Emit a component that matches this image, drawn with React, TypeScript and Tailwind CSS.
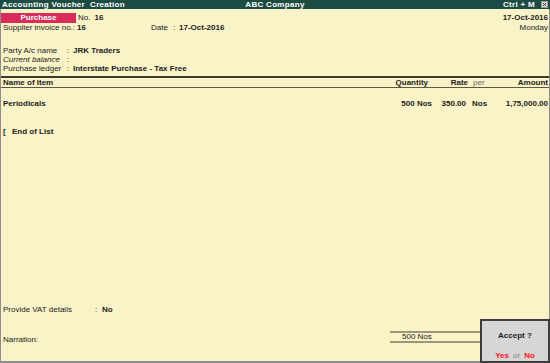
import React from "react";

const font = { fontFamily: '"Liberation Sans", Arial, sans-serif' };

const LedgerRow: React.FC<{ label: string; value?: string; italic?: boolean }> = ({ label, value, italic }) => (
  <div className="flex h-[9px] items-center leading-[9px]">
    <span className={`w-[64px] ${italic ? "italic" : ""}`}>{label}</span>
    <span className="w-[6px]">:</span>
    {value && <span className="font-bold">{value}</span>}
  </div>
);

const App: React.FC = () => {
  return (
    <div
      className="relative flex h-[363px] w-[550px] flex-col overflow-hidden bg-[#f9f3c7] text-[8px] text-[#1c1c1c]"
      style={font}
    >
      {/* title bar */}
      <div className="grid h-[9px] grid-cols-3 items-center bg-[#1c4c44] px-[2px] text-[8px] font-bold leading-none tracking-[0.3px] text-white">
        <span className="whitespace-pre">Accounting Voucher  Creation</span>
        <span className="text-center">ABC Company</span>
        <div className="flex items-center justify-end gap-[6px]">
          <span>Ctrl + M</span>
          <svg width="7" height="7" viewBox="0 0 7 7">
            <rect x="0.5" y="0.5" width="6" height="6" fill="#d8d8d8" stroke="#9a9a9a" />
            <path d="M2 2 L5 5 M5 2 L2 5" stroke="#333" strokeWidth="0.9" />
          </svg>
        </div>
      </div>

      <div className="flex flex-1 flex-col border-x border-b-2 border-[#8d8d8d]">
        {/* voucher head */}
        <div className="flex justify-between pr-[1px] pt-[4px]">
          <div className="flex flex-col">
            <div className="flex h-[10px] items-center">
              <div className="flex h-[10px] w-[75px] items-center justify-center bg-[#d92c5a] font-bold text-white">
                Purchase
              </div>
              <span className="ml-[2px]">No.</span>
              <span className="ml-[4px] font-bold">16</span>
            </div>
            <div className="flex h-[9px] items-center pl-[2px] leading-[9px]">
              <span className="w-[74px]">Supplier invoice no.:</span>
              <span className="w-[74px] font-bold">16</span>
              <span className="w-[22px]">Date</span>
              <span className="w-[6px]">:</span>
              <span className="font-bold">17-Oct-2016</span>
            </div>
            <div className="mt-[14px] pl-[2px]">
              <LedgerRow label="Party A/c name" value="JRK Traders" />
              <LedgerRow label="Current balance" italic />
              <LedgerRow label="Purchase ledger" value="Interstate Purchase - Tax Free" />
            </div>
          </div>
          <div className="flex flex-col items-end">
            <div className="h-[10px] font-bold leading-[9px]">17-Oct-2016</div>
            <div className="h-[9px] leading-[9px]">Monday</div>
          </div>
        </div>

        {/* item table header */}
        <div className="mt-[3px] flex h-[12px] items-start border-y-2 border-b border-t-[#3b3a30] border-b-[#5e5a45] pl-[2px] pr-[1px] font-bold leading-[9px]">
          <span className="flex-1">Name of Item</span>
          <span className="w-[60px] pr-[4px] text-right">Quantity</span>
          <span className="w-[36px] text-right">Rate</span>
          <span className="w-[20px] pl-[5px] font-normal text-[#6b6b6b]">per</span>
          <span className="w-[60px] text-right">Amount</span>
        </div>

        {/* items */}
        <div className="mt-[11px] flex h-[9px] items-center pl-[2px] pr-[1px] font-bold leading-[9px]">
          <span className="flex-1">Periodicals</span>
          <span className="w-[60px] text-right">500 Nos</span>
          <span className="w-[34px] text-right">350.00</span>
          <span className="w-[22px] pl-[6px]">Nos</span>
          <span className="w-[60px] text-right">1,75,000.00</span>
        </div>
        <div className="mt-[19px] flex h-[9px] items-center pl-[2px] font-bold leading-[9px]">
          <span className="w-[9px]">[</span>
          <span>End of List</span>
        </div>

        <div className="flex-1" />

        {/* footer */}
        <div className="flex h-[9px] items-center pl-[2px] leading-[9px]">
          <span className="w-[92px]">Provide VAT details</span>
          <span className="w-[7px]">:</span>
          <span className="font-bold">No</span>
        </div>
        <div className="mb-[16px] mt-[17px] flex h-[14px] items-start pl-[2px]">
          <span className="pt-[4px] leading-[9px]">Narration:</span>
          <div className="ml-auto mr-[69px] flex h-[12px] w-[90px] items-center border-y-2 border-[#9c9777] pl-[12px] leading-[8px]">
            500 Nos
          </div>
        </div>
      </div>

      {/* accept prompt */}
      <div className="absolute bottom-0 right-0 flex h-[44px] w-[70px] flex-col items-center border-2 border-[#3d3d3d] bg-[#d6d6d6] pt-[10px]">
        <span className="font-bold leading-[9px]">Accept ?</span>
        <div className="mt-[11px] flex gap-[4px] leading-[9px]">
          <span className="font-bold text-[#ff1414]">Yes</span>
          <span className="text-[#8a8a8a]">or</span>
          <span className="font-bold text-[#ff1414]">No</span>
        </div>
      </div>
    </div>
  );
};

export default App;
